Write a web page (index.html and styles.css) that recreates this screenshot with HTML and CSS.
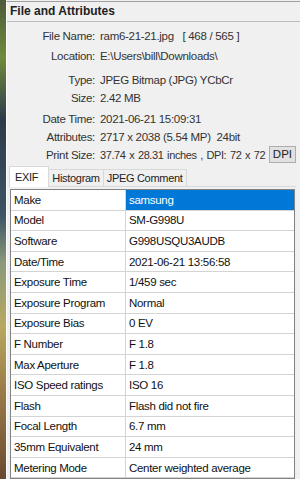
FILE: index.html
```html
<!DOCTYPE html>
<html lang="en">
<head>
    <meta charset="utf-8">
    <title>File and Attributes</title>
    <link rel="stylesheet" href="styles.css">
</head>
<body>
    <div class="strip"></div>
    <div class="panel">
        <h1 class="title">File and Attributes</h1>
        <div class="info">
            <div class="row"><span class="label">File Name:</span><span class="value">ram6-21-21.jpg &nbsp; [ 468 / 565 ]</span></div>
            <div class="row gap-s"><span class="label">Location:</span><span class="value">E:\Users\bill\Downloads\</span></div>
            <div class="row gap-l"><span class="label">Type:</span><span class="value">JPEG Bitmap (JPG) YCbCr</span></div>
            <div class="row"><span class="label">Size:</span><span class="value">2.42 MB</span></div>
            <div class="row gap-m"><span class="label">Date Time:</span><span class="value">2021-06-21 15:09:31</span></div>
            <div class="row"><span class="label">Attributes:</span><span class="value">2717 x 2038 (5.54 MP) &nbsp;24bit</span></div>
            <div class="row"><span class="label">Print Size:</span><span class="value tight">37.74 x 28.31 inches , DPI: 72 x 72</span><button class="dpi">DPI</button></div>
        </div>
        <div class="tabs">
            <span class="tab active">EXIF</span>
            <span class="tab">Histogram</span>
            <span class="tab">JPEG Comment</span>
        </div>
        <div class="exif">
            <div class="cell">Make</div><div class="cell selected">samsung</div>
            <div class="cell">Model</div><div class="cell">SM-G998U</div>
            <div class="cell">Software</div><div class="cell">G998USQU3AUDB</div>
            <div class="cell">Date/Time</div><div class="cell">2021-06-21 13:56:58</div>
            <div class="cell">Exposure Time</div><div class="cell">1/459 sec</div>
            <div class="cell">Exposure Program</div><div class="cell">Normal</div>
            <div class="cell">Exposure Bias</div><div class="cell">0 EV</div>
            <div class="cell">F Number</div><div class="cell">F 1.8</div>
            <div class="cell">Max Aperture</div><div class="cell">F 1.8</div>
            <div class="cell">ISO Speed ratings</div><div class="cell">ISO 16</div>
            <div class="cell">Flash</div><div class="cell">Flash did not fire</div>
            <div class="cell">Focal Length</div><div class="cell">6.7 mm</div>
            <div class="cell">35mm Equivalent</div><div class="cell">24 mm</div>
            <div class="cell">Metering Mode</div><div class="cell">Center weighted average</div>
        </div>
    </div>
</body>
</html>
```

FILE: styles.css
```css
body {
    background-color: #F0F0F0;
    color: #222;
    display: flex;
    font-family: "Liberation Sans", Arial, sans-serif;
    font-size: 11.5px;
    height: 479px;
    letter-spacing: -0.3px;
    margin: 0;
    overflow: hidden;
}
.strip {
    background: linear-gradient(180deg, #4f5a3a 0%, #6f8a3e 12%, #2e3b4a 25%, #3d5566 45%, #8a9a7a 55%, #b8a860 68%, #9a7a48 82%, #6a4a30 100%);
    flex: 0 0 6px;
}
.panel {
    border-left: 1px solid #FFF;
    border-top: 1px solid #A0A0A0;
    flex: 1;
    margin-top: 1px;
    min-width: 0;
    padding: 0 4px 0 2px;
}
.title {
    border-bottom: 1px solid #BDBDBD;
    font-size: 12px;
    font-weight: bold;
    height: 19px;
    letter-spacing: 0;
    line-height: 18px;
    margin: 0 -4px 0 -2px;
    padding: 0 0 0 3px;
}
.info {
    color: #333;
    padding: 5px 0 0;
}
.row {
    align-items: center;
    display: flex;
    height: 18px;
}
.gap-s {
    margin-top: 2px;
}
.gap-m {
    margin-top: 3px;
}
.gap-l {
    margin-top: 6px;
}
.label {
    flex: 0 0 86px;
    padding-right: 5px;
    text-align: right;
}
.value {
    flex: 1;
    min-width: 0;
    white-space: nowrap;
}
.tight {
    font-size: 11px;
    letter-spacing: -0.4px;
    word-spacing: 1px;
}
.dpi {
    background-color: #E1E1E1;
    border: 1px solid #ADADAD;
    color: #222;
    flex: 0 0 auto;
    font: inherit;
    height: 17px;
    margin-top: -2px;
    padding: 0 3px;
}
.tabs {
    border-bottom: 1px solid #D9D9D9;
    display: flex;
    font-size: 11px;
    height: 20px;
    letter-spacing: -0.3px;
    margin-top: 2px;
}
.tab {
    border: 1px solid #D9D9D9;
    border-bottom: none;
    height: 16px;
    line-height: 16px;
    margin-left: -1px;
    margin-top: 3px;
    padding: 0 3px;
}
.tab.active {
    background-color: #FFF;
    height: 20px;
    line-height: 20px;
    margin: 0 0 -1px;
    padding: 0 10px 0 5px;
}
.exif {
    background-color: #FFF;
    border: 1px solid #828282;
    display: grid;
    grid-auto-rows: 20.6px;
    grid-template-columns: 115px 1fr;
    margin: 2px 0 0 1px;
    width: 283px;
}
.cell {
    align-items: center;
    border-bottom: 1px solid #D4D4D4;
    color: #111;
    display: flex;
    padding-left: 3px;
    white-space: nowrap;
}
.cell:nth-child(odd) {
    border-right: 1px solid #D4D4D4;
}
.cell.selected {
    background-color: #0078D7;
    color: #FFF;
}
```
